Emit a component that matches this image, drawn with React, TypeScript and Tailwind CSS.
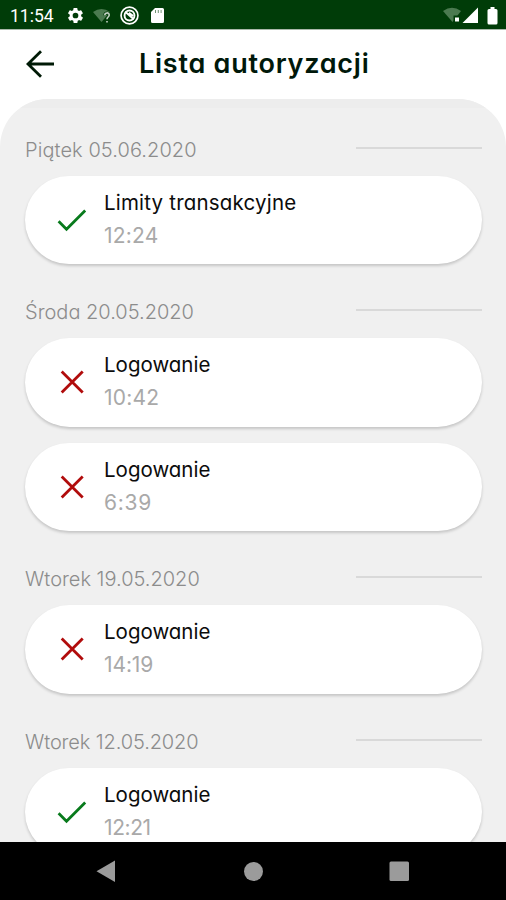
import React from 'react';
import clsx from 'clsx';

type Status = 'accepted' | 'rejected';

interface Entry {
  title: string;
  time: string;
  status: Status;
  titleClass?: string;
  timeClass?: string;
}

interface Day {
  label: string;
  labelClass?: string;
  entries: Entry[];
}

const days: Day[] = [
  {
    label: 'Piątek 05.06.2020',
    labelClass: 'tracking-[0.08px]',
    entries: [{ title: 'Limity transakcyjne', time: '12:24', status: 'accepted', titleClass: 'tracking-[0.2px]', timeClass: 'tracking-[0.2px]' }],
  },
  {
    label: 'Środa 20.05.2020',
    entries: [
      { title: 'Logowanie', time: '10:42', status: 'rejected', timeClass: 'tracking-[0.2px]' },
      { title: 'Logowanie', time: '6:39', status: 'rejected', timeClass: 'tracking-[0.7px]' },
    ],
  },
  {
    label: 'Wtorek 19.05.2020',
    entries: [{ title: 'Logowanie', time: '14:19', status: 'rejected', timeClass: 'tracking-[-0.1px]' }],
  },
  {
    label: 'Wtorek 12.05.2020',
    labelClass: 'tracking-[-0.12px]',
    entries: [{ title: 'Logowanie', time: '12:21', status: 'accepted', timeClass: 'tracking-[-0.4px]' }],
  },
];

const StatusBar: React.FC = () => (
  <div className="h-[30px] shrink-0 bg-[#003c08] border-b border-[#a9b8aa] flex items-center justify-between pt-[2px] pl-[10px] pr-[8px] text-white">
    <div className="flex items-center">
      <span className="w-[44px] pt-[2px] whitespace-nowrap font-['Roboto',sans-serif] text-[17.5px] leading-none">11:54</span>
      <svg className="ml-[12px]" width="19" height="19" viewBox="0 0 24 24" fill="currentColor">
        <path d="M19.1 12.9a7 7 0 0 0 0-1.8l2-1.6a.5.5 0 0 0 .1-.6l-1.9-3.3a.5.5 0 0 0-.6-.2l-2.4 1a7 7 0 0 0-1.6-1l-.4-2.5a.5.5 0 0 0-.5-.4h-3.8a.5.5 0 0 0-.5.4l-.4 2.5a7 7 0 0 0-1.6 1l-2.4-1a.5.5 0 0 0-.6.2L2.7 8.9a.5.5 0 0 0 .1.6l2 1.6a7 7 0 0 0 0 1.8l-2 1.6a.5.5 0 0 0-.1.6l1.9 3.3c.1.2.4.3.6.2l2.4-1a7 7 0 0 0 1.6 1l.4 2.5c0 .2.2.4.5.4h3.8c.2 0 .5-.2.5-.4l.4-2.5a7 7 0 0 0 1.6-1l2.4 1c.2.1.5 0 .6-.2l1.9-3.3a.5.5 0 0 0-.1-.6zM12 15.6a3.6 3.6 0 1 1 0-7.2 3.6 3.6 0 0 1 0 7.2z" />
      </svg>
      <svg className="ml-[8px]" width="19" height="18" viewBox="0 0 19 18">
        <path d="M0 5Q8.5-1 17 5L8.5 15z" fill="#4b7a50" />
        <path d="M11.8 8.2c0-3 4.4-3 4.4-.2 0 2-2.2 2-2.2 4.2M14 14v1.6" fill="none" stroke="#003c08" strokeWidth="3" />
        <path d="M11.8 8.2c0-3 4.4-3 4.4-.2 0 2-2.2 2-2.2 4.2M14 14v1.6" fill="none" stroke="#c4d2c5" strokeWidth="1.6" />
      </svg>
      <svg className="ml-[8px]" width="19" height="19" viewBox="0 0 18 18" fill="none" stroke="currentColor">
        <circle cx="9" cy="9" r="8" strokeWidth="1.6" />
        <circle cx="9" cy="9" r="4.7" strokeWidth="1.8" />
        <path d="M5 5.5l8 7M8.5 6.5l4 3" strokeWidth="1.8" />
      </svg>
      <svg className="ml-[11px]" width="15" height="17" viewBox="0 0 15 17">
        <path d="M5 1h7.5A1.5 1.5 0 0 1 14 2.5v12a1.5 1.5 0 0 1-1.5 1.5h-10A1.5 1.5 0 0 1 1 14.5V5z" fill="currentColor" />
        <path d="M5.5 3v3M8.3 3v3M11.1 3v3" stroke="#6f9272" strokeWidth="1" />
      </svg>
    </div>
    <div className="flex items-center">
      <svg width="18" height="17" viewBox="0 0 18 17">
        <path d="M0 4Q9-2.5 18 4L9.5 15z" fill="#4b7a50" />
        <path d="M10.5 8.5h7v8h-7z" fill="#003c08" />
        <path d="M12 10.5h4v4h-4z" fill="currentColor" />
      </svg>
      <svg className="ml-px" width="17" height="17" viewBox="0 0 17 17">
        <path d="M16 .5V16H.5z" fill="currentColor" />
      </svg>
      <svg className="ml-[8px]" width="11" height="18" viewBox="0 0 11 18">
        <path d="M3.5 0h4v2H9a1.5 1.5 0 0 1 1.5 1.5V16A1.5 1.5 0 0 1 9 17.5H2A1.5 1.5 0 0 1 .5 16V3.5A1.5 1.5 0 0 1 2 2h1.5z" fill="currentColor" />
      </svg>
    </div>
  </div>
);

const StatusIcon: React.FC<{ status: Status }> = ({ status }) => (
  <svg width="30" height="24" viewBox="0 0 30 24" fill="none" strokeWidth="2.8" className="shrink-0">
    {status === 'accepted' ? (
      <path d="M1.6 13.3l7.9 7.9L28.2 2.6" stroke="#087a1c" />
    ) : (
      <path d="M4.7 1.5l21 21M25.7 1.5l-21 21" stroke="#b10c0c" />
    )}
  </svg>
);

const EntryCard: React.FC<{ entry: Entry }> = ({ entry }) => (
  <button className="w-full h-[88.5px] rounded-full bg-white pl-[32px] flex items-center text-left shadow-[0_2px_3px_rgba(0,0,0,0.18)]">
    <StatusIcon status={entry.status} />
    <span className="ml-[17px] pb-[2px] flex flex-col whitespace-nowrap">
      <span className={clsx('text-[20.5px] leading-[33px] text-[#0c0c0c]', entry.titleClass)}>{entry.title}</span>
      <span className={clsx('text-[21px] leading-[33px] text-[#a9a9a9]', entry.timeClass)}>{entry.time}</span>
    </span>
  </button>
);

const DaySection: React.FC<{ day: Day }> = ({ day }) => (
  <section className="mb-[32px]">
    <div className="h-[42px] flex justify-between">
      <h2 className={clsx('pt-px text-[20px] leading-[30px] font-[350] text-[#8c8c8c] whitespace-nowrap', day.labelClass)}>
        {day.label}
      </h2>
      <div className="mt-[13px] h-[2px] w-[126px] bg-[#d9d9d9]" />
    </div>
    <div className="flex flex-col gap-4">
      {day.entries.map((entry) => (
        <EntryCard key={entry.time} entry={entry} />
      ))}
    </div>
  </section>
);

export default function App() {
  return (
    <div className="w-full h-screen flex flex-col overflow-hidden bg-white font-['Inter',sans-serif] [font-feature-settings:'cv11']">
      <StatusBar />
      <header className="h-[69px] shrink-0 flex items-center pl-[26px] pb-[2px]">
        <button aria-label="Wstecz">
          <svg width="29" height="28" viewBox="0 0 29 28" fill="none" stroke="#001a06" strokeWidth="2.8">
            <path d="M15 1.2L2 14l13 12.8M2 14h26" />
          </svg>
        </button>
        <h1 className="ml-[84px] text-[27px] leading-[36px] tracking-[0.75px] font-semibold text-[#00180a] whitespace-nowrap">
          Lista autoryzacji
        </h1>
      </header>
      <main className="flex-1 min-h-0 overflow-hidden rounded-t-[48px] bg-[#f0f0f0]">
        <div className="h-[9px] bg-[#ededed]" />
        <div className="pt-[25.6px] pl-[25px] pr-[24px]">
          {days.map((day) => (
            <DaySection key={day.label} day={day} />
          ))}
        </div>
      </main>
      <nav className="h-[58px] shrink-0 bg-black flex items-center justify-center">
        <svg width="506" height="58" viewBox="0 0 506 58" fill="#9b9b9b">
          <path d="M115 18.5v21.5L96.5 29.2z" />
          <circle cx="253.5" cy="29.5" r="9.5" />
          <rect x="389.5" y="19.5" width="19.5" height="19.5" rx="1.5" />
        </svg>
      </nav>
    </div>
  );
}
